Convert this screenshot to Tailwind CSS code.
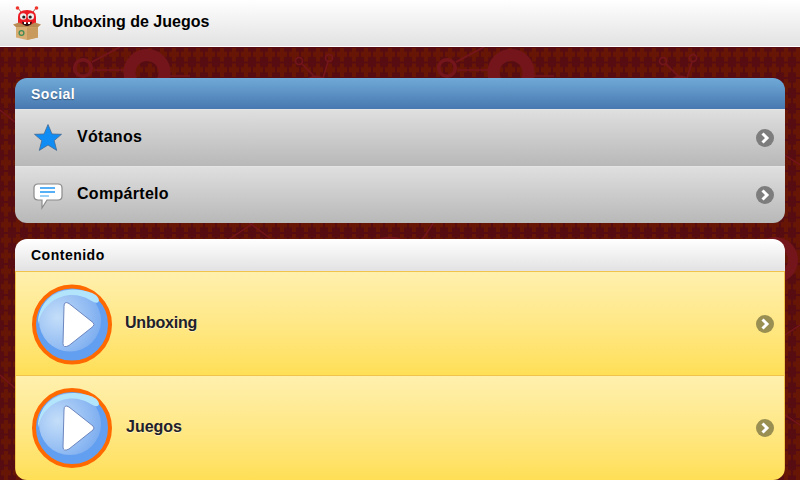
<!DOCTYPE html>
<html>
<head>
<meta charset="utf-8">
<script src="https://cdn.jsdelivr.net/npm/@tailwindcss/browser@4"></script>
</head>
<body class="m-0">
<div class="relative w-[800px] h-[480px] overflow-hidden bg-[#560c10] font-['Liberation_Sans',Arial,sans-serif]">
  <svg class="absolute inset-0" width="800" height="480" viewBox="0 0 800 480" fill="none">
    <defs>
      <pattern id="tile" x="0" y="47" width="12" height="15.5" patternUnits="userSpaceOnUse">
        <rect width="12" height="15.5" fill="#560c10"/>
        <path d="M4 1h4v3.5h3v5.5h-3v4.5h-4v-4.5h-3v-5.5h3z" fill="#671504"/>
      </pattern>
      <pattern id="deco" x="0" y="0" width="364" height="480" patternUnits="userSpaceOnUse">
        <circle cx="83" cy="68" r="8.3" stroke="#74151b" stroke-width="3.5"/>
        <path d="M92 62L120 47M94 70H124M170 76H190" stroke="#74151b" stroke-width="1.5"/>
        <circle cx="147" cy="72.5" r="17.5" stroke="#74151b" stroke-width="12"/>
        <circle cx="299" cy="61" r="3.5" stroke="#74151b" stroke-width="1.5"/>
        <circle cx="329" cy="58" r="3.5" stroke="#74151b" stroke-width="1.5"/>
        <path d="M302 64L314 76M328 62L323 78" stroke="#74151b" stroke-width="1.5"/>
        <circle cx="316" cy="88" r="10" stroke="#74151b" stroke-width="5"/>
      </pattern>
    </defs>
    <rect width="800" height="480" fill="url(#tile)"/>
    <rect width="800" height="480" fill="url(#deco)"/>
    <circle cx="775" cy="260" r="18" stroke="#74151b" stroke-width="10"/>
    <path d="M228 240L255 222M248 222L270 238M422 240L434 222M0 110L15 122M785 155L800 165M785 335L800 325M0 375L15 388M785 415L800 425" stroke="#74151b" stroke-width="1.5"/>
    <path d="M378 240Q390 235 402 240" stroke="#74151b" stroke-width="2"/>
  </svg>

  <div class="relative flex flex-col h-full">
    <header class="h-[47px] shrink-0 flex items-center bg-linear-to-b from-white to-[#e2e2e2] border-b border-white">
      <div class="w-[52px] h-full flex items-center justify-center pl-[2px]">
        <svg width="30" height="34" viewBox="0 0 30 34">
          <path d="M9 6L6 2M21 6L24 2" stroke="#a3584a" stroke-width="1"/>
          <circle cx="5.5" cy="2" r="1.8" fill="#f0332b"/><circle cx="24.5" cy="2" r="1.8" fill="#f0332b"/>
          <path d="M6 22V11Q6 4 15 4Q24 4 24 11V22z" fill="#ec1c24"/>
          <circle cx="11.2" cy="10.5" r="3.2" fill="#eee"/><circle cx="18.8" cy="10.5" r="3.2" fill="#eee"/>
          <circle cx="11.8" cy="11" r="1.6" fill="#222"/><circle cx="18.2" cy="11" r="1.6" fill="#222"/>
          <path d="M10 15.5Q15 18 20 15.5L19 20H11z" fill="#2f1210"/>
          <path d="M12 16h2v2h-2zM16 16h2v2h-2z" fill="#fff"/>
          <path d="M1 18.5L7 16.5L14 20H16L23 16.5L29 18.5L25 22H5z" fill="#b98b52"/>
          <path d="M4 21H26V31.5L15 34L4 31.5z" fill="#d8ad72"/>
          <path d="M15 21.5V34L26 31.5V21z" fill="#c99a5e"/>
          <circle cx="9.5" cy="27" r="2.4" fill="none" stroke="#3f8a55" stroke-width="1.3"/>
        </svg>
      </div>
      <h1 class="m-0 text-base font-bold text-black -translate-y-[1px]">Unboxing de Juegos</h1>
    </header>

    <div class="flex flex-col gap-4 px-[15px] pt-[31px]">
      <section class="rounded-xl overflow-hidden h-[145px] shrink-0 flex flex-col">
        <div class="h-[31px] shrink-0 pl-4 flex items-center bg-linear-to-b from-[#70aad8] to-[#4878b0] text-sm font-bold text-white tracking-[0.5px] [text-shadow:0_1px_1px_rgba(0,0,0,0.35)]">Social</div>
        <div class="h-[57px] shrink-0 flex items-center bg-linear-to-b from-[#dfdfdf] to-[#b8b8b8] border-t border-[#e4e4e4] relative">
          <svg class="ml-[17px]" width="32" height="32" viewBox="0 0 32 32">
            <path d="M16 2.5L20 12L29.5 12.3L22.2 18.6L24.7 28.4L16 23L7.3 28.4L9.8 18.6L2.5 12.3L12 12z" fill="#0f8df5" stroke="#456a90" stroke-width="0.8" stroke-linejoin="round"/>
          </svg>
          <span class="ml-[13px] text-base font-bold text-black tracking-[0.3px] -translate-y-[1px]">Vótanos</span>
          <svg class="absolute right-[10px] top-[18px]" width="20" height="20" viewBox="0 0 20 20">
            <circle cx="10" cy="10" r="9" fill="#7d7d7d"/><path d="M7.5 5.5L12 10L7.5 14.5" fill="none" stroke="#fff" stroke-width="3"/>
          </svg>
        </div>
        <div class="h-[57px] shrink-0 flex items-center bg-linear-to-b from-[#dfdfdf] to-[#b8b8b8] border-t border-[#e4e4e4] relative">
          <svg class="ml-[17px]" width="32" height="32" viewBox="0 0 32 32">
            <path d="M6 5H26Q30 5 30 9V17Q30 21 26 21H15L10 29V21H6Q2 21 2 17V9Q2 5 6 5z" fill="#fff" stroke="#8a8a8a" stroke-width="1.2"/>
            <path d="M8 9H23M8 13H23" stroke="#1e96f5" stroke-width="1.5"/><path d="M8 17H17" stroke="#7cc0f5" stroke-width="1.5"/>
          </svg>
          <span class="ml-[13px] text-base font-bold text-black tracking-[0.3px] -translate-y-[1px]">Compártelo</span>
          <svg class="absolute right-[10px] top-[18px]" width="20" height="20" viewBox="0 0 20 20">
            <circle cx="10" cy="10" r="9" fill="#7d7d7d"/><path d="M7.5 5.5L12 10L7.5 14.5" fill="none" stroke="#fff" stroke-width="3"/>
          </svg>
        </div>
      </section>

      <section class="rounded-xl overflow-hidden h-[241px] shrink-0 flex flex-col">
        <div class="h-[32px] shrink-0 pl-4 flex items-center bg-linear-to-b from-white to-[#e2e2e2] text-sm font-bold text-black tracking-[0.5px]">Contenido</div>
        <div class="h-[105px] shrink-0 flex items-center bg-linear-to-b from-[#fff0ad] to-[#ffdf55] border border-[#f0c44c] relative">
          <svg class="ml-[15px] translate-y-[0.5px]" width="82" height="82" viewBox="0 0 82 82">
            <defs>
              <radialGradient id="b" cx="0.3" cy="0.45" r="0.7"><stop offset="0" stop-color="#c4def9"/><stop offset="1" stop-color="#7eaef0"/></radialGradient>
            </defs>
            <circle cx="41" cy="41" r="38" fill="#639ff0" stroke="#ff6a00" stroke-width="4"/>
            <ellipse cx="39" cy="37" rx="31" ry="31" fill="url(#b)"/>
            <path d="M7 41C6 20 24 6 42 6C54 6 68 10 68 17C67 21 63 19 58 16C40 5 12 14 7 41z" fill="#b2e4fc"/>
            <path d="M33 23Q33 17 38 20L62 39Q64 41 62 43L38 62Q32 65 32 60z" fill="#fff" stroke="#6c86bf" stroke-width="1"/>
          </svg>
          <span class="ml-[12px] text-base font-bold text-[#20202c] tracking-[-0.2px] -translate-y-[1px] [text-shadow:0_1px_0_rgba(255,255,255,0.5)]">Unboxing</span>
          <svg class="absolute right-[9px] top-[42px]" width="20" height="20" viewBox="0 0 20 20">
            <circle cx="10" cy="10" r="9" fill="#9a8f52"/><path d="M7.5 5.5L12 10L7.5 14.5" fill="none" stroke="#fff" stroke-width="3"/>
          </svg>
        </div>
        <div class="h-[104px] shrink-0 flex items-center bg-linear-to-b from-[#fff0ad] to-[#ffdf55] border-x border-[#f0c44c] relative">
          <svg class="ml-[15px]" width="82" height="82" viewBox="0 0 82 82">
            <circle cx="41" cy="41" r="38" fill="#639ff0" stroke="#ff6a00" stroke-width="4"/>
            <ellipse cx="39" cy="37" rx="31" ry="31" fill="url(#b)"/>
            <path d="M7 41C6 20 24 6 42 6C54 6 68 10 68 17C67 21 63 19 58 16C40 5 12 14 7 41z" fill="#b2e4fc"/>
            <path d="M33 23Q33 17 38 20L62 39Q64 41 62 43L38 62Q32 65 32 60z" fill="#fff" stroke="#6c86bf" stroke-width="1"/>
          </svg>
          <span class="ml-[13px] text-base font-bold text-[#20202c] -translate-y-[1px] [text-shadow:0_1px_0_rgba(255,255,255,0.5)]">Juegos</span>
          <svg class="absolute right-[9px] top-[42px]" width="20" height="20" viewBox="0 0 20 20">
            <circle cx="10" cy="10" r="9" fill="#9a8f52"/><path d="M7.5 5.5L12 10L7.5 14.5" fill="none" stroke="#fff" stroke-width="3"/>
          </svg>
        </div>
      </section>
    </div>
  </div>
</div>
</body>
</html>
